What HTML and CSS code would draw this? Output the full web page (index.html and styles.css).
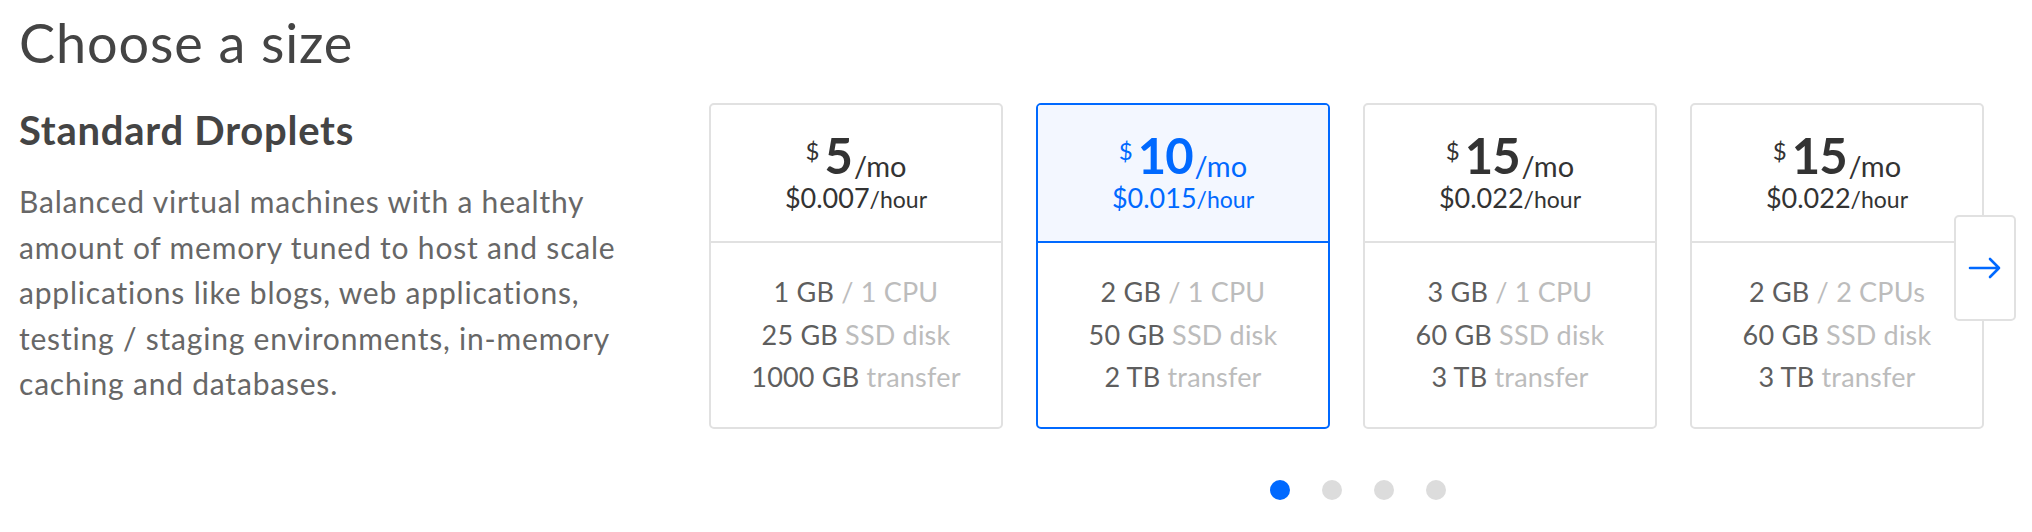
FILE: index.html
```html
<!DOCTYPE html>
<html lang="en">
<head>
<meta charset="utf-8">
<title>Choose a size</title>
<link rel="stylesheet" href="styles.css">
</head>
<body>
<div class="page">
  <h1 class="title">Choose a size</h1>
  <div class="row">
    <div class="intro">
      <h2 class="subtitle">Standard Droplets</h2>
      <p class="desc">Balanced virtual machines with a healthy amount of memory tuned to host and scale applications like blogs, web applications, testing / staging environments, in-memory caching and databases.</p>
    </div>
    <div class="carousel">
      <div class="track">
        <div class="cards">
          <div class="card">
            <div class="card-head">
              <div class="price"><span class="cur">$</span><span class="amt">5</span><span class="per">/mo</span></div>
              <div class="hourly">$0.007<span class="unit">/hour</span></div>
            </div>
            <div class="card-body">
              <div class="spec">1 GB <span class="muted">/ 1 CPU</span></div>
              <div class="spec">25 GB <span class="muted">SSD disk</span></div>
              <div class="spec">1000 GB <span class="muted">transfer</span></div>
            </div>
          </div>
          <div class="card selected">
            <div class="card-head">
              <div class="price"><span class="cur">$</span><span class="amt">10</span><span class="per">/mo</span></div>
              <div class="hourly">$0.015<span class="unit">/hour</span></div>
            </div>
            <div class="card-body">
              <div class="spec">2 GB <span class="muted">/ 1 CPU</span></div>
              <div class="spec">50 GB <span class="muted">SSD disk</span></div>
              <div class="spec">2 TB <span class="muted">transfer</span></div>
            </div>
          </div>
          <div class="card">
            <div class="card-head">
              <div class="price"><span class="cur">$</span><span class="amt">15</span><span class="per">/mo</span></div>
              <div class="hourly">$0.022<span class="unit">/hour</span></div>
            </div>
            <div class="card-body">
              <div class="spec">3 GB <span class="muted">/ 1 CPU</span></div>
              <div class="spec">60 GB <span class="muted">SSD disk</span></div>
              <div class="spec">3 TB <span class="muted">transfer</span></div>
            </div>
          </div>
          <div class="card">
            <div class="card-head">
              <div class="price"><span class="cur">$</span><span class="amt">15</span><span class="per">/mo</span></div>
              <div class="hourly">$0.022<span class="unit">/hour</span></div>
            </div>
            <div class="card-body">
              <div class="spec">2 GB <span class="muted">/ 2 CPUs</span></div>
              <div class="spec">60 GB <span class="muted">SSD disk</span></div>
              <div class="spec">3 TB <span class="muted">transfer</span></div>
            </div>
          </div>
        </div>
        <button class="next" type="button" aria-label="Next">
          <svg width="34" height="22" viewBox="0 0 34 22" fill="none" stroke="#0069ff" stroke-width="2.6" stroke-linecap="round" stroke-linejoin="round"><path d="M2 11 H31 M22 2 L31 11 L22 20"/></svg>
        </button>
      </div>
      <div class="dots">
        <span class="dot active"></span>
        <span class="dot"></span>
        <span class="dot"></span>
        <span class="dot"></span>
      </div>
    </div>
  </div>
</div>
</body>
</html>
```
FILE: styles.css
```css
* { box-sizing: border-box; }
html, body { margin: 0; padding: 0; background: #fff; }
body {
  font-family: Lato, "Noto Sans", "Liberation Sans", sans-serif;
  color: #444;
}
.page { padding: 7px 19px 0 19px; }
.title {
  margin: 0;
  font-size: 54px;
  font-weight: 400;
  line-height: 72px;
  color: #444;
  letter-spacing: 0.9px;
}
.row {
  display: flex;
  margin-top: 24px;
}
.intro {
  flex: 0 0 690px;
  padding-top: 3px;
}
.subtitle {
  margin: 0;
  font-size: 40px;
  font-weight: 700;
  line-height: 48px;
  color: #444;
  letter-spacing: 0.75px;
}
.desc {
  margin: 25px 0 0 0;
  width: 610px;
  font-size: 30px;
  line-height: 45.6px;
  color: #676767;
  letter-spacing: 0.8px;
}
.carousel { flex: 1; }
.track { position: relative; width: 1275px; }
.cards { display: flex; gap: 33px; }
.card {
  width: 294px;
  height: 326px;
  border: 2px solid #e1e1e1;
  border-radius: 5px;
  display: flex;
  flex-direction: column;
  background: #fff;
  overflow: hidden;
}
.card-head {
  height: 138px;
  border-bottom: 2px solid #e1e1e1;
  display: flex;
  flex-direction: column;
  align-items: center;
  justify-content: center;
  color: #333;
  padding-top: 0;
}
.price { display: flex; align-items: flex-start; line-height: 1; }
.cur { font-size: 24px; margin-top: 8px; margin-right: 5px; }
.amt { font-size: 49px; font-weight: 700; letter-spacing: -1px; }
.per { font-size: 29px; align-self: flex-end; margin-left: 2px; line-height: 1; }
.hourly { font-size: 27px; line-height: 1.2; margin-top: 2px; }
.unit { font-size: 23px; }
.card-body {
  flex: 1;
  display: flex;
  flex-direction: column;
  align-items: center;
  justify-content: center;
  padding-bottom: 0;
}
.spec { font-size: 27px; line-height: 42.5px; color: #5e5e5e; letter-spacing: 0.2px; }
.muted { color: #bcbcbc; }
.card.selected { border-color: #0069ff; }
.card.selected .card-head {
  background: #f3f7ff;
  border-bottom-color: #0069ff;
  color: #0069ff;
}
.next {
  position: absolute;
  right: -32px;
  top: 112px;
  width: 62px;
  height: 106px;
  background: #fff;
  border: 2px solid #e1e1e1;
  border-radius: 5px;
  padding: 0;
  display: flex;
  align-items: center;
  justify-content: center;
  cursor: pointer;
}
.dots {
  display: flex;
  justify-content: center;
  gap: 32px;
  margin-top: 51px;
  padding-right: 7px;
}
.dot {
  width: 20px;
  height: 20px;
  border-radius: 50%;
  background: #dcdcdc;
}
.dot.active { background: #0069ff; }
```
